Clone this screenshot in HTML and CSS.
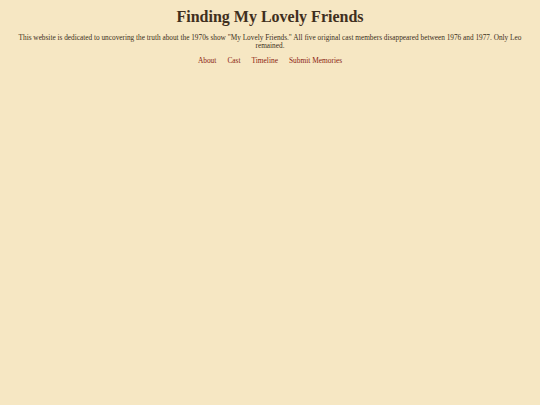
FILE: index.html
```html
<!DOCTYPE html>
<html lang="en">
<head>
<meta charset="utf-8">
<title>Finding My Lovely Friends</title>
<link rel="stylesheet" href="styles.css">
</head>
<body>
<header class="site-header">
  <h1 class="title">Finding My Lovely Friends</h1>
  <p class="intro">This website is dedicated to uncovering the truth about the 1970s show "My Lovely Friends." All five original cast members disappeared between 1976 and 1977. Only Leo remained.</p>
  <nav class="nav">
    <a href="#" class="nav-link">About</a>
    <a href="#" class="nav-link">Cast</a>
    <a href="#" class="nav-link">Timeline</a>
    <a href="#" class="nav-link">Submit Memories</a>
  </nav>
</header>
</body>
</html>
```
FILE: styles.css
```css
html, body {
  margin: 0;
  padding: 0;
}
body {
  background: #f6e7c3;
  color: #3d3020;
  font-family: "Liberation Serif", "DejaVu Serif", serif;
  min-height: 405px;
}
.site-header {
  padding: 8px 12px 0;
  text-align: center;
}
.title {
  margin: 0;
  font-size: 16px;
  line-height: 18px;
  font-weight: bold;
  color: #3f2f1e;
}
.intro {
  margin: 8px 0 0;
  font-size: 7.3px;
  line-height: 8px;
}
.nav {
  margin-top: 6px;
  display: flex;
  justify-content: center;
  gap: 11px;
  font-size: 7.4px;
}
.nav-link {
  color: #8b1e12;
  text-decoration: none;
}
```
